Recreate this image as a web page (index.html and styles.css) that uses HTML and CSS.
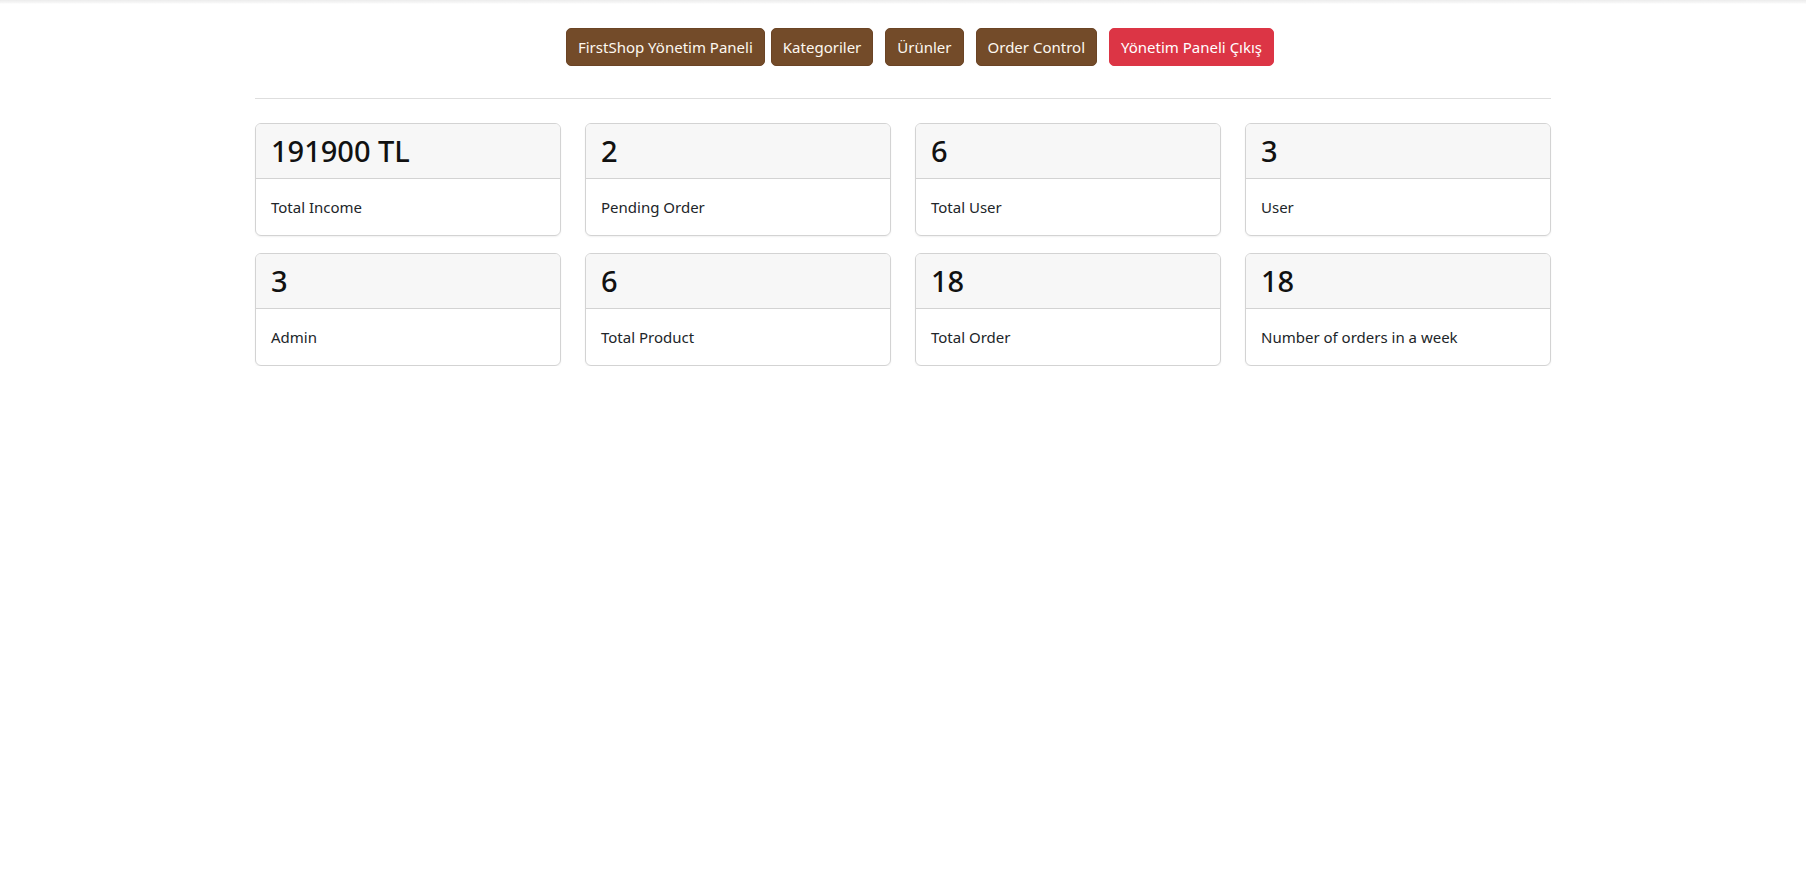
FILE: index.html
```html
<!DOCTYPE html>
<html lang="tr">
<head>
<meta charset="utf-8">
<title>FirstShop Yönetim Paneli</title>
<link rel="stylesheet" href="styles.css">
</head>
<body>
<div class="topstrip"></div>
<div class="container">
  <nav class="nav">
    <a class="btn btn-brown" href="#">FirstShop Yönetim Paneli</a>
    <div class="nav-links">
      <a class="btn btn-brown" href="#">Kategoriler</a>
      <a class="btn btn-brown" href="#">Ürünler</a>
      <a class="btn btn-brown" href="#">Order Control</a>
      <a class="btn btn-red" href="#">Yönetim Paneli Çıkış</a>
    </div>
  </nav>
  <hr class="divider">
  <div class="stats">
    <div class="card"><div class="card-header"><h2>191900 TL</h2></div><div class="card-body"><p>Total Income</p></div></div>
    <div class="card"><div class="card-header"><h2>2</h2></div><div class="card-body"><p>Pending Order</p></div></div>
    <div class="card"><div class="card-header"><h2>6</h2></div><div class="card-body"><p>Total User</p></div></div>
    <div class="card"><div class="card-header"><h2>3</h2></div><div class="card-body"><p>User</p></div></div>
    <div class="card"><div class="card-header"><h2>3</h2></div><div class="card-body"><p>Admin</p></div></div>
    <div class="card"><div class="card-header"><h2>6</h2></div><div class="card-body"><p>Total Product</p></div></div>
    <div class="card"><div class="card-header"><h2>18</h2></div><div class="card-body"><p>Total Order</p></div></div>
    <div class="card"><div class="card-header"><h2>18</h2></div><div class="card-body"><p>Number of orders in a week</p></div></div>
  </div>
</div>
</body>
</html>
```
FILE: styles.css
```css
* { box-sizing: border-box; }
html, body { margin: 0; padding: 0; background: #fff; }
body {
  font-family: "Noto Sans", "Open Sans", sans-serif;
  font-size: 15px;
  color: #212529;
}
.topstrip {
  height: 4px;
  background: linear-gradient(to bottom, #ececec, #f7f7f7 70%, #fff);
}
.container {
  max-width: 1296px;
  margin: 0 auto;
}
.nav {
  display: flex;
  justify-content: center;
  align-items: center;
  padding: 24px 0 0 34px;
  height: 62px;
}
.nav-links {
  display: flex;
  gap: 12px;
  margin-left: 6px;
}
.btn {
  display: inline-block;
  height: 38px;
  line-height: 36px;
  padding: 0 11px;
  border-radius: 5px;
  border: 1px solid transparent;
  text-decoration: none;
  color: #fdf8f0;
  font-size: 15px;
  white-space: nowrap;
}
.btn-brown { background: #734b29; border-color: #6b4425; }
.btn-red { background: #dc3545; border-color: #dc3545; color: #fff; }
.divider {
  border: 0;
  border-top: 1px solid #dedede;
  margin: 32px 0 24px;
}
.stats {
  display: grid;
  grid-template-columns: repeat(4, 1fr);
  column-gap: 24px;
  row-gap: 17px;
}
.card {
  border: 1px solid #d3d3d3;
  border-radius: 6px;
  overflow: hidden;
  box-shadow: 0 1px 2px rgba(0,0,0,0.06);
}
.card-header {
  background: #f7f7f7;
  border-bottom: 1px solid #d3d3d3;
  padding: 8px 15px;
}
.card-header h2 {
  margin: 0;
  font-size: 29px;
  line-height: 38px;
  font-weight: 500;
  color: #111;
}
.card-body { padding: 16px 15px; }
.card-body p { margin: 0; line-height: 24px; }
```
